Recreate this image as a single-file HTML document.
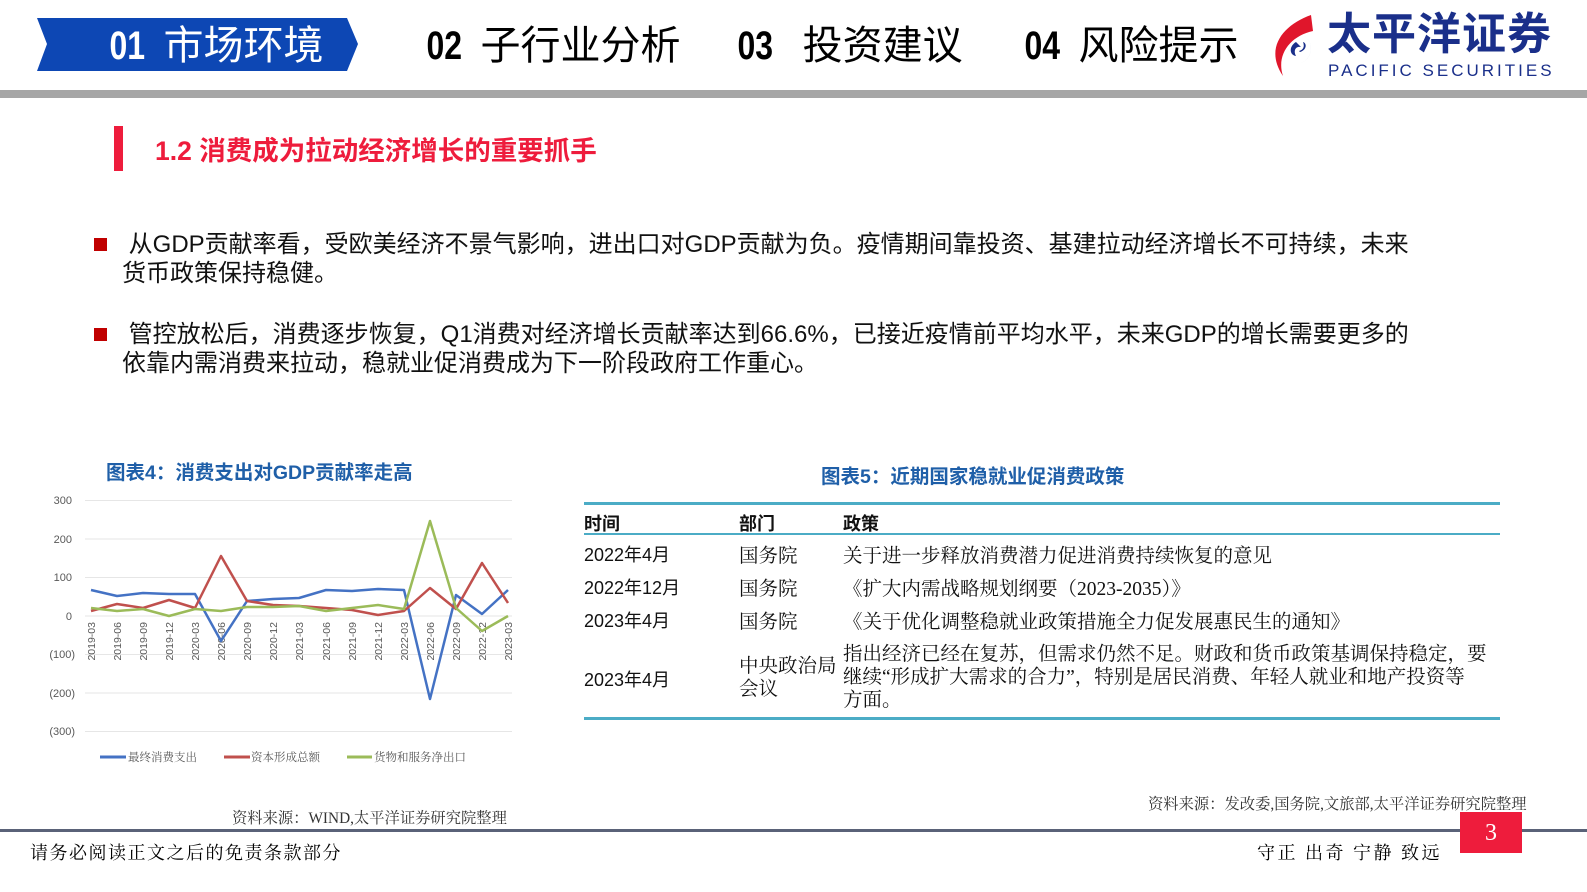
<!DOCTYPE html>
<html><head><meta charset="utf-8"><style>
*{margin:0;padding:0;box-sizing:border-box}
body{width:1587px;height:892px;background:#fff;position:relative;overflow:hidden;font-family:"Liberation Sans","Noto Sans CJK SC",sans-serif;color:#000}
.a{position:absolute;white-space:nowrap}
.nav{font-size:40px;top:20px;line-height:52px}
.nav b{font-family:"Liberation Sans",sans-serif;font-weight:bold;transform:scaleX(0.8);display:inline-block;margin-right:14px}
.ser{font-family:"Liberation Serif","Noto Serif CJK SC",serif}
.p{font-size:24px;line-height:29px;color:#111}
.bul{position:absolute;width:13px;height:13px;background:#c00000}
.t{font-size:18px;color:#111}
.s{font-size:19.5px}
</style></head><body>
<svg class="a" style="left:0;top:0" width="1587" height="100">
<polygon points="37,18 347,18 358,44 347,71 37,71 47,44" fill="#0d47b4"/>
<rect x="0" y="90" width="1587" height="8" fill="#a6a6a6"/>
<path d="M1311,15 C1283,25 1264,48 1283,76 C1276,55 1290,36 1313,31 Z" fill="#e0162b"/>
<path d="M1303,35 A14,14 0 1 1 1288,62 A11,11 0 1 0 1303,35 Z" fill="#1a2f8a"/>
<path d="M1296,42 C1289,46 1289,55 1296,56 C1293,50 1296,46 1301,47 Z M1300,52 C1307,50 1307,43 1303,42 C1305,47 1303,50 1299,51 Z" fill="#1a2f8a"/>
</svg>
<div class="a nav" style="left:105px;color:#fff"><b>01</b>市场环境</div>
<div class="a nav" style="left:422px"><b>02</b>子行业分析</div>
<div class="a nav" style="left:733px"><b>03</b> 投资建议</div>
<div class="a nav" style="left:1020px"><b>04</b>风险提示</div>
<div class="a" style="left:1327px;top:10px;font-size:44px;font-weight:bold;color:#1a2f8a;letter-spacing:1px;line-height:50px">太平洋证券</div>
<div class="a" style="left:1328px;top:61px;font-size:17px;color:#1a2f8a;letter-spacing:3px">PACIFIC SECURITIES</div>

<div class="a" style="left:114px;top:126px;width:9px;height:45px;background:#ee1c3c"></div>
<div class="a" style="left:155px;top:134px;font-size:26.5px;font-weight:bold;color:#ee1c3c;line-height:34px">1.2 消费成为拉动经济增长的重要抓手</div>

<div class="bul" style="left:94px;top:238px"></div>
<div class="a p" style="left:122px;top:230px">&nbsp;从GDP贡献率看，受欧美经济不景气影响，进出口对GDP贡献为负。疫情期间靠投资、基建拉动经济增长不可持续，未来<br>货币政策保持稳健。</div>
<div class="bul" style="left:94px;top:328px"></div>
<div class="a p" style="left:122px;top:320px">&nbsp;管控放松后，消费逐步恢复，Q1消费对经济增长贡献率达到66.6%，已接近疫情前平均水平，未来GDP的增长需要更多的<br>依靠内需消费来拉动，稳就业促消费成为下一阶段政府工作重心。</div>

<div class="a" style="left:106px;top:456px;font-size:19.5px;font-weight:bold;color:#1f5fa8">图表4：消费支出对GDP贡献率走高</div>
<div class="a" style="left:821px;top:460px;font-size:19.5px;font-weight:bold;color:#1f5fa8">图表5：近期国家稳就业促消费政策</div>

<svg class="a" style="left:0;top:480px" width="560" height="300">
<g transform="translate(0,-480)" font-family="Liberation Sans,sans-serif" font-size="11" fill="#595959">
<g stroke="#e6e6e6" stroke-width="1">
<line x1="85" x2="512" y1="500.5" y2="500.5"/><line x1="85" x2="512" y1="539" y2="539"/><line x1="85" x2="512" y1="577.5" y2="577.5"/><line x1="85" x2="512" y1="616" y2="616"/><line x1="85" x2="512" y1="654.5" y2="654.5"/><line x1="85" x2="512" y1="693" y2="693"/><line x1="85" x2="512" y1="731.5" y2="731.5"/>
</g>
<g text-anchor="end"><text x="72" y="504">300</text><text x="72" y="543">200</text><text x="72" y="581">100</text><text x="72" y="620">0</text><text x="75" y="658">(100)</text><text x="75" y="697">(200)</text><text x="75" y="735">(300)</text></g>
<g font-size="10.5" text-anchor="end">
<text transform="translate(95,622) rotate(-90)">2019-03</text><text transform="translate(121,622) rotate(-90)">2019-06</text><text transform="translate(147,622) rotate(-90)">2019-09</text><text transform="translate(173,622) rotate(-90)">2019-12</text><text transform="translate(199,622) rotate(-90)">2020-03</text><text transform="translate(225,622) rotate(-90)">2020-06</text><text transform="translate(251,622) rotate(-90)">2020-09</text><text transform="translate(277,622) rotate(-90)">2020-12</text><text transform="translate(303,622) rotate(-90)">2021-03</text><text transform="translate(330,622) rotate(-90)">2021-06</text><text transform="translate(356,622) rotate(-90)">2021-09</text><text transform="translate(382,622) rotate(-90)">2021-12</text><text transform="translate(408,622) rotate(-90)">2022-03</text><text transform="translate(434,622) rotate(-90)">2022-06</text><text transform="translate(460,622) rotate(-90)">2022-09</text><text transform="translate(486,622) rotate(-90)">2022-12</text><text transform="translate(512,622) rotate(-90)">2023-03</text>
</g>
<g fill="none" stroke-width="2.5" stroke-linejoin="round">
<polyline stroke="#4472c4" points="91,590 117,596 143,593 169,594 195,594 221,641 247,601 273,599 299,598 326,590 352,591 378,589 404,590 430,699 456,595 482,614 508,590"/>
<polyline stroke="#c0504d" points="91,611 117,604 143,608 169,600 195,608 221,556 247,601 273,605 299,606 326,608 352,610 378,615 404,611 430,588 456,609 482,563 508,603"/>
<polyline stroke="#9bbb59" points="91,608 117,611 143,609 169,616 195,609 221,611 247,607 273,607 299,606 326,611 352,608 378,605 404,609 430,521 456,608 482,631 508,616"/>
</g>
<g stroke-width="3"><line x1="100" x2="126" y1="757" y2="757" stroke="#4472c4"/><line x1="224" x2="250" y1="757" y2="757" stroke="#c0504d"/><line x1="347" x2="372" y1="757" y2="757" stroke="#9bbb59"/></g>
<g font-family="Liberation Serif,Noto Serif CJK SC,serif" font-size="11.5"><text x="128" y="761">最终消费支出</text><text x="251" y="761">资本形成总额</text><text x="374" y="761">货物和服务净出口</text></g>
</g></svg>

<div class="a" style="left:584px;top:502px;width:916px;height:3px;background:#4bacc6"></div>
<div class="a" style="left:584px;top:533px;width:916px;height:2px;background:#4bacc6"></div>
<div class="a" style="left:584px;top:717px;width:916px;height:3px;background:#4bacc6"></div>
<div class="a t" style="left:584px;top:510px;font-weight:bold">时间</div>
<div class="a t" style="left:739px;top:510px;font-weight:bold">部门</div>
<div class="a t" style="left:843px;top:510px;font-weight:bold">政策</div>
<div class="a t" style="left:584px;top:541px">2022年4月</div>
<div class="a t ser s" style="left:739px;top:540px">国务院</div>
<div class="a t ser s" style="left:843px;top:540px">关于进一步释放消费潜力促进消费持续恢复的意见</div>
<div class="a t" style="left:584px;top:574px">2022年12月</div>
<div class="a t ser s" style="left:739px;top:573px">国务院</div>
<div class="a t ser s" style="left:843px;top:573px">《扩大内需战略规划纲要（2023-2035）》</div>
<div class="a t" style="left:584px;top:607px">2023年4月</div>
<div class="a t ser s" style="left:739px;top:606px">国务院</div>
<div class="a t ser s" style="left:843px;top:606px">《关于优化调整稳就业政策措施全力促发展惠民生的通知》</div>
<div class="a t" style="left:584px;top:666px">2023年4月</div>
<div class="a t ser s" style="left:739px;top:655px;line-height:23px">中央政治局<br>会议</div>
<div class="a t ser s" style="left:843px;top:643px;line-height:23px">指出经济已经在复苏，但需求仍然不足。财政和货币政策基调保持稳定，要<br>继续“形成扩大需求的合力”，特别是居民消费、年轻人就业和地产投资等<br>方面。</div>

<div class="a ser" style="left:1148px;top:792px;font-size:15.3px;color:#333">资料来源：发改委,国务院,文旅部,太平洋证券研究院整理</div>
<div class="a ser" style="left:232px;top:806px;font-size:15.3px;color:#333">资料来源：WIND,太平洋证券研究院整理</div>
<div class="a" style="left:0;top:829px;width:1587px;height:3px;background:#5a6278"></div>
<div class="a" style="left:1460px;top:812px;width:62px;height:41px;background:#ee1c3c;color:#fff;font-family:'Liberation Serif',serif;font-size:24px;text-align:center;line-height:42px">3</div>
<div class="a ser" style="left:30px;top:839px;font-size:18px;letter-spacing:1.5px">请务必阅读正文之后的免责条款部分</div>
<div class="a ser" style="left:1257px;top:839px;font-size:18px;letter-spacing:2.5px">守正 出奇 宁静 致远</div>
</body></html>
